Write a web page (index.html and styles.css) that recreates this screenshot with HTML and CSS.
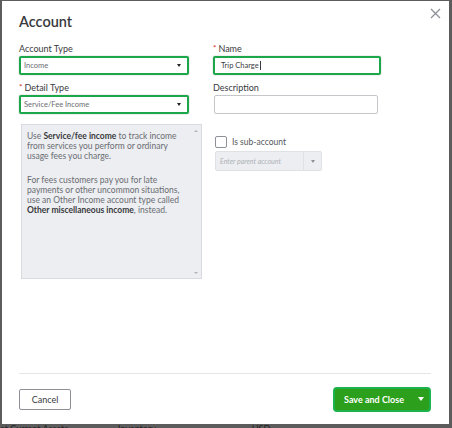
FILE: index.html
```html
<!DOCTYPE html>
<html lang="en">
<head>
  <meta charset="UTF-8">
  <meta name="viewport" content="width=device-width, initial-scale=1.0">
  <title>Account</title>
  <link rel="stylesheet" href="styles.css">
</head>
<body>
  <div class="modal">
    <button class="close-btn" aria-label="Close">
      <svg width="11" height="11" viewBox="0 0 11 11">
        <path d="M1 1 L10 10 M10 1 L1 10" stroke="#8d9096" stroke-width="1.3" fill="none"/>
      </svg>
    </button>
    <h1>Account</h1>

    <div class="form">
      <div class="col col-left">
        <label class="field-label">Account Type</label>
        <div class="select focused">
          <span>Income</span>
          <span class="caret"></span>
        </div>

        <label class="field-label"><span class="req">*</span>Detail Type</label>
        <div class="select focused">
          <span>Service/Fee Income</span>
          <span class="caret"></span>
        </div>

        <div class="help">
          <div class="help-text">
            <p>Use <b>Service/fee income</b> to track income from services you perform or ordinary usage fees you charge.</p>
            <p>For fees customers pay you for late payments or other uncommon situations, use an Other Income account type called <b>Other miscellaneous income</b>, instead.</p>
          </div>
          <div class="scroll">
            <span class="arrow-up"></span>
            <span class="arrow-down"></span>
          </div>
        </div>
      </div>

      <div class="col col-right">
        <label class="field-label"><span class="req">*</span>Name</label>
        <div class="input focused name-input">
          <span>Trip Charge</span><span class="cursor"></span>
        </div>

        <label class="field-label">Description</label>
        <div class="input desc-input"></div>

        <div class="sub-account">
          <span class="checkbox"></span>
          <span>Is sub-account</span>
        </div>
        <div class="combo">
          <span class="placeholder">Enter parent account</span>
          <span class="combo-btn"><span class="caret grey"></span></span>
        </div>
      </div>
    </div>

    <div class="footer">
      <button class="btn-cancel">Cancel</button>
      <button class="btn-save">
        <span>Save and Close</span>
        <span class="caret white"></span>
      </button>
    </div>
  </div>

  <!-- the accounts list peeking out under the dialog -->
  <div class="behind">
    <span class="c1">et Current Assets</span>
    <span class="c2">Inventory</span>
    <span class="c3">USD</span>
  </div>
</body>
</html>
```

FILE: styles.css
```css
html, body {
  margin: 0;
  padding: 0;
}
body {
  width: 452px;
  height: 428px;
  overflow: hidden;
  background-color: #5c5c5c;
  font-family: Lato, "Open Sans", Arial, sans-serif;
  color: #393a3d;
}
.modal {
  position: relative;
  box-sizing: border-box;
  margin: 1px 3px 0 2px;
  height: 423px;
  background: white;
  padding: 11px 18px 0 17px;
  display: flex;
  flex-direction: column;
}
.close-btn {
  position: absolute;
  top: 7px;
  right: 8px;
  padding: 0;
  border: none;
  background: none;
  width: 11px;
  height: 11px;
  line-height: 0;
}
h1 {
  margin: 0;
  font-size: 14.5px;
  line-height: 20px;
  font-weight: 600;
}
.form {
  display: flex;
  gap: 24px;
  margin-top: 11px;
  flex: 1;
}
.col {
  display: flex;
  flex-direction: column;
  align-items: flex-start;
}
.col-left {
  width: 170px;
}
.field-label {
  display: block;
  font-size: 9px;
  line-height: 11px;
  height: 11px;
  margin-bottom: 2px;
}
.req {
  color: #d52b1e;
  font-size: 8px;
  margin-right: 2px;
  vertical-align: 1px;
}
.select, .input {
  box-sizing: border-box;
  height: 19px;
  display: flex;
  align-items: center;
  font-size: 7.5px;
  color: #6b6c72;
  background: white;
  margin-bottom: 7px;
}
.select {
  width: 170px;
  justify-content: space-between;
  padding: 0 6px 0 3px;
}
.focused {
  border: 2px solid #1ca84a;
  border-radius: 2px;
  box-shadow: 0 0 0 1px rgba(0, 0, 0, 0.06);
}
.caret {
  width: 0;
  height: 0;
  border-left: 2.5px solid transparent;
  border-right: 2.5px solid transparent;
  border-top: 3px solid #222;
}
.caret.grey {
  border-top-color: #8d9096;
}
.caret.white {
  border-left-width: 3.5px;
  border-right-width: 3.5px;
  border-top: 4px solid white;
}
.name-input {
  width: 168px;
  padding-left: 6px;
  color: #393a3d;
}
.cursor {
  display: inline-block;
  width: 0;
  height: 9px;
  border-right: 1px solid #393a3d;
  margin-left: 1px;
}
.desc-input {
  width: 164px;
  margin-left: 1px;
  border: 1px solid #c4c6ca;
  border-radius: 2px;
}
.help {
  box-sizing: border-box;
  width: 181px;
  height: 155px;
  margin: 3px 0 0 2px;
  background: #eceef1;
  border: 1px solid #d8dadf;
  display: flex;
  font-size: 8.5px;
  line-height: 10.2px;
  color: #6b6c72;
}
.help-text {
  flex: 1;
  padding: 6px 2px 0 5px;
}
.help p {
  margin: 0 0 13px 0;
}
.help b {
  color: #393a3d;
  font-weight: 700;
}
.scroll {
  width: 10px;
  display: flex;
  flex-direction: column;
  justify-content: space-between;
  align-items: center;
  padding: 5px 0 4px;
}
.arrow-up, .arrow-down {
  width: 0;
  height: 0;
  border-left: 2px solid transparent;
  border-right: 2px solid transparent;
}
.arrow-up {
  border-bottom: 2px solid #b0b2b6;
}
.arrow-down {
  border-top: 2px solid #b0b2b6;
}
.sub-account {
  display: flex;
  align-items: center;
  gap: 5px;
  font-size: 8.5px;
  color: #55575c;
  margin: 15px 0 3px 2px;
}
.checkbox {
  box-sizing: border-box;
  width: 12px;
  height: 12px;
  border: 1px solid #8d9096;
  border-radius: 2px;
  background: white;
}
.combo {
  box-sizing: border-box;
  width: 107px;
  height: 20px;
  margin-left: 2px;
  display: flex;
  background: #eceef1;
  border: 1px solid #dfe1e5;
  border-radius: 2px;
}
.placeholder {
  flex: 1;
  display: flex;
  align-items: center;
  padding-left: 4px;
  font-size: 7px;
  font-style: italic;
  color: #b0b2b6;
}
.combo-btn {
  width: 17px;
  border-left: 1px solid #dfe1e5;
  display: flex;
  align-items: center;
  justify-content: center;
}
.footer {
  border-top: 1px solid #e3e5e8;
  margin-top: 8px;
  height: 50px;
  display: flex;
  justify-content: space-between;
  align-items: center;
}
.btn-cancel {
  width: 52px;
  height: 21px;
  background: white;
  border: 1px solid #8d9096;
  border-radius: 2px;
  font-family: inherit;
  font-size: 9px;
  color: #393a3d;
  padding: 0;
}
.btn-save {
  box-sizing: border-box;
  width: 98px;
  height: 25px;
  background: #2ca01c;
  border: 2px solid #1cb24c;
  border-radius: 4px;
  color: white;
  font-family: inherit;
  font-size: 9px;
  font-weight: 700;
  display: flex;
  align-items: center;
  justify-content: space-between;
  padding: 0 5px 0 9px;
}
.behind {
  position: relative;
  height: 4px;
  font-size: 9px;
  line-height: 10px;
  color: #222;
  overflow: hidden;
}
.behind span {
  position: absolute;
  top: 0;
}
.c1 { left: 0; }
.c2 { left: 118px; }
.c3 { left: 252px; }
```
